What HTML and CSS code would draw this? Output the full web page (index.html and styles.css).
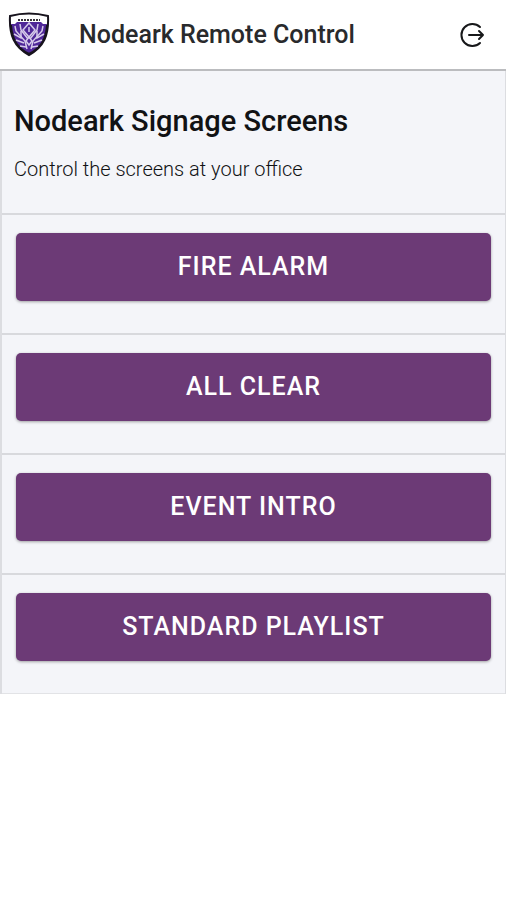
FILE: index.html
```html
<!DOCTYPE html>
<html lang="en">
<head>
<meta charset="utf-8">
<meta name="viewport" content="width=device-width, initial-scale=1">
<title>Nodeark Remote Control</title>
<link rel="stylesheet" href="styles.css">
</head>
<body>
<header class="toolbar">
  <svg class="logo" viewBox="0 0 42 46" aria-hidden="true">
    <path d="M2 4Q21-1 40 4C41 23 36 35 21 43C6 35 1 23 2 4Z" fill="#fff" stroke="#17131d" stroke-width="2"/>
    <path d="M3 12H7L9 10H33L35 12H39C38 26 33 35 21 42C9 35 4 26 3 12Z" fill="#4f2798"/>
    <path d="M3 13C4 27 9 36 21 42C33 36 38 27 39 13" fill="none" stroke="#17131d" stroke-width="2"/>
    <path d="M10 8H32" stroke="#39363c" stroke-width="2" stroke-dasharray="2 1"/>
    <g fill="none" stroke="#d6cbea" stroke-width="1.5">
      <path d="M21 11L15 18L21 25L27 18ZM21 25L18 29L21 33L24 29ZM21 15V20"/>
      <path d="M12 12L13 18L20 27M30 12L29 18L22 27"/>
      <path d="M7 14L8 19L17 29L19 37M35 14L34 19L25 29L23 37"/>
      <path d="M6 22L13 26V19M36 22L29 26V19M8 28L16 31M34 28L26 31M12 34L18 35M30 34L24 35"/>
    </g>
  </svg>
  <h1 class="title">Nodeark Remote Control</h1>
  <button class="logout" type="button" aria-label="Log out">
    <svg class="logout-icon" viewBox="0 0 26 26" aria-hidden="true">
      <path d="M20 5A11 11 0 1 0 20 21M9 13H23M19 9L23 13L19 17"/>
    </svg>
  </button>
</header>
<main class="screens">
  <section class="row intro">
    <h2 class="heading">Nodeark Signage Screens</h2>
    <p class="description">Control the screens at your office</p>
  </section>
  <div class="row"><button class="action" type="button">FIRE ALARM</button></div>
  <div class="row"><button class="action" type="button">ALL CLEAR</button></div>
  <div class="row"><button class="action" type="button">EVENT INTRO</button></div>
  <div class="row"><button class="action" type="button">STANDARD PLAYLIST</button></div>
</main>
</body>
</html>
```
FILE: styles.css
```css
* {
  box-sizing: border-box;
}

body {
  margin: 0;
  background: #fff;
  color: #111214;
  font-family: Roboto, "Liberation Sans", sans-serif;
}

.toolbar {
  display: flex;
  align-items: center;
  padding: 12px 20px 11px 8px;
  border-bottom: 2px solid #bbbcbf;
}

.logo {
  width: 42px;
  height: 46px;
}

.title {
  flex: 1;
  margin: 0 0 0 29px;
  font-size: 25px;
  font-weight: 500;
  line-height: 32px;
  color: #292a2c;
}

.logout {
  display: flex;
  padding: 0;
  border: 0;
  background: none;
}

.logout-icon {
  width: 26px;
  height: 26px;
  fill: none;
  stroke: #17181a;
  stroke-width: 2;
  stroke-linecap: round;
  stroke-linejoin: round;
}

.screens {
  border: solid #dcdde1;
  border-width: 0 1px 0 2px;
  background: #f4f5f9;
}

.row {
  padding: 18px 14px 32px;
  border-bottom: 2px solid #d8d9dd;
}

.row:last-child {
  border-bottom: 1px solid #e2e3e6;
}

.intro {
  padding: 32px 12px;
}

.heading {
  margin: 0;
  font-size: 29px;
  font-weight: 500;
  line-height: 36px;
}

.description {
  margin: 18px 0 0;
  font-size: 20px;
  font-weight: 300;
  line-height: 24px;
  color: #111214;
}

.action {
  display: block;
  width: 100%;
  padding: 18px 16px;
  border: 0;
  border-radius: 5px;
  background: #6c3a76;
  box-shadow: 0 1px 3px rgb(0 0 0 / 35%);
  color: #fff;
  font-family: inherit;
  font-size: 25px;
  font-weight: 500;
  line-height: 32px;
  letter-spacing: 1px;
}
```
